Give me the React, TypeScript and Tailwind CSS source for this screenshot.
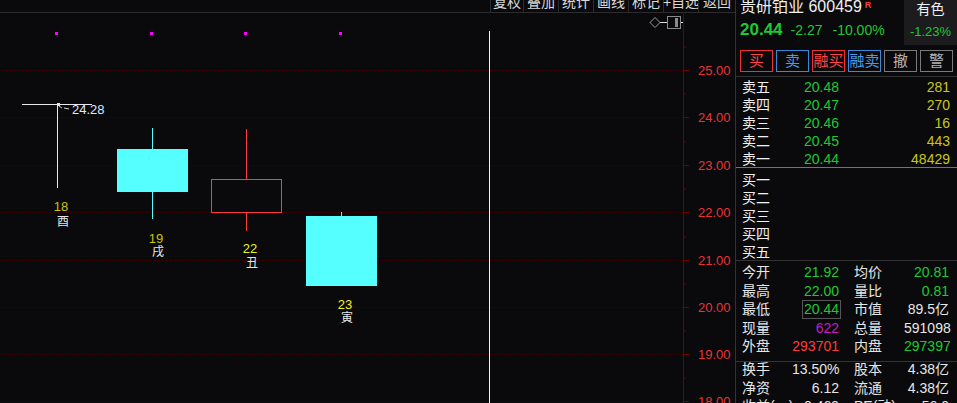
import React from 'react'

const FONT = "font-['Liberation_Sans','Noto_Sans_CJK_SC',sans-serif]"

const toolbarItems = [
  { label: '复权', w: 'w-[33px]' },
  { label: '叠加', w: 'w-[35px]' },
  { label: '统计', w: 'w-[35px]' },
  { label: '画线', w: 'w-[35px]' },
  { label: '标记', w: 'w-[35px]' },
  { label: '+自选', w: 'w-[35px]' },
  { label: '返回', w: 'w-[37px]' },
]

const sells = [
  ['卖五', '20.48', '281'],
  ['卖四', '20.47', '270'],
  ['卖三', '20.46', '16'],
  ['卖二', '20.45', '443'],
  ['卖一', '20.44', '48429'],
]

const buys = ['买一', '买二', '买三', '买四', '买五']

const priceLevels = [
  { y: 70, label: '25.00' },
  { y: 117, label: '24.00' },
  { y: 165, label: '23.00' },
  { y: 212, label: '22.00' },
  { y: 260, label: '21.00' },
  { y: 307, label: '20.00' },
  { y: 354, label: '19.00' },
  { y: 401, label: '18.00' },
]

interface StatRow {
  l1: string
  v1: string
  c1: string
  l2: string
  v2: string
  c2: string
  boxed?: boolean
}

const stats: StatRow[] = [
  { l1: '今开', v1: '21.92', c1: 'text-[#1ec832]', l2: '均价', v2: '20.81', c2: 'text-[#1ec832]' },
  { l1: '最高', v1: '22.00', c1: 'text-[#1ec832]', l2: '量比', v2: '0.81', c2: 'text-[#1ec832]' },
  { l1: '最低', v1: '20.44', c1: 'text-[#1ec832]', l2: '市值', v2: '89.5亿', c2: 'text-[#e6e6e6]', boxed: true },
  { l1: '现量', v1: '622', c1: 'text-[#c01ec8]', l2: '总量', v2: '591098', c2: 'text-[#e6e6e6]' },
  { l1: '外盘', v1: '293701', c1: 'text-[#ff3c3c]', l2: '内盘', v2: '297397', c2: 'text-[#1ec832]' },
]

const stats2: StatRow[] = [
  { l1: '换手', v1: '13.50%', c1: 'text-[#e6e6e6]', l2: '股本', v2: '4.38亿', c2: 'text-[#e6e6e6]' },
  { l1: '净资', v1: '6.12', c1: 'text-[#e6e6e6]', l2: '流通', v2: '4.38亿', c2: 'text-[#e6e6e6]' },
  { l1: '收益(一)', v1: '0.469', c1: 'text-[#e6e6e6]', l2: 'PE(动)', v2: '56.0', c2: 'text-[#e6e6e6]' },
]

function Toolbar() {
  return (
    <div className="flex h-[13px] shrink-0 justify-end overflow-hidden border-b border-[#2c2c2c]">
      {toolbarItems.map((item) => (
        <div
          key={item.label}
          className={`${item.w} flex h-[12px] justify-center overflow-visible whitespace-nowrap border-l border-[#2c2c2c] text-[14px] leading-[14px] text-[#d8d8d8]`}
        >
          <span className="-mt-[5px]">{item.label}</span>
        </div>
      ))}
    </div>
  )
}

function Chart() {
  return (
    <svg width={735} height={390} viewBox="0 13 735 390" className="block shrink-0">
      {/* grid */}
      {priceLevels.map((p) => (
        <line key={p.label} x1={2} x2={683} y1={p.y + 0.5} y2={p.y + 0.5} stroke="#4e0000" strokeDasharray="1 3" />
      ))}

      {/* price axis */}
      <line x1={683.5} x2={683.5} y1={13} y2={403} stroke="#6e0000" />
      {priceLevels.map((p) => (
        <g key={'t' + p.label}>
          <line x1={683} x2={689} y1={p.y + 0.5} y2={p.y + 0.5} stroke="#6e0000" />
          <line x1={683} x2={686} y1={p.y - 23} y2={p.y - 23} stroke="#6e0000" />
          <text x={698} y={p.y + 5} fontSize={13} fill="#e83434">
            {p.label}
          </text>
        </g>
      ))}

      {/* top widget */}
      <line x1={650} x2={683} y1={22.5} y2={22.5} stroke="#e0e0e0" />
      <path d="M655 17.5 L660 22.5 L655 27.5 L650 22.5 Z" fill="#0a0a0c" stroke="#9a9a9a" />
      <rect x={667.5} y={16.5} width={13} height={12} fill="#0a0a0c" stroke="#8a8a8a" />
      <rect x={675} y={18} width={3} height={9} fill="#8a8a8a" />

      {/* markers */}
      {[55, 150, 244, 339].map((x) => (
        <rect key={x} x={x} y={32} width={3} height={3} fill="#ff00ff" />
      ))}

      {/* cursor */}
      <line x1={489.5} x2={489.5} y1={31} y2={403} stroke="#f0f0f0" />

      {/* candle 18 */}
      <line x1={22} x2={92} y1={104.5} y2={104.5} stroke="#e8e8e8" />
      <line x1={57.5} x2={57.5} y1={104} y2={188} stroke="#e8e8e8" />
      <rect x={57} y={103} width={3} height={3} fill="#e8e8e8" />
      <path d="M59 106 L62 108 M64 108 L69 109" stroke="#d0d0d0" fill="none" />
      <text x={72} y={114} fontSize={13} fill="#dde8ff">
        24.28
      </text>
      <text x={61} y={211} fontSize={13} fill="#c8c800" textAnchor="middle">18</text>
      <text x={63} y={226} fontSize={12} fill="#e8e8e8" textAnchor="middle">酉</text>

      {/* candle 19 */}
      <line x1={152.5} x2={152.5} y1={128} y2={219} stroke="#55ffff" />
      <rect x={117} y={149} width={71} height={43} fill="#55ffff" />
      <text x={156} y={243} fontSize={13} fill="#c8c800" textAnchor="middle">19</text>
      <text x={158} y={256} fontSize={12} fill="#e8e8e8" textAnchor="middle">戌</text>

      {/* candle 22 */}
      <line x1={246.5} x2={246.5} y1={129} y2={179} stroke="#ff3c3c" />
      <line x1={246.5} x2={246.5} y1={212} y2={231} stroke="#ff3c3c" />
      <rect x={211.5} y={179.5} width={70} height={33} fill="none" stroke="#ff3c3c" />
      <text x={250} y={253} fontSize={13} fill="#f0f020" textAnchor="middle">22</text>
      <text x={252} y={267} fontSize={12} fill="#e8e8e8" textAnchor="middle">丑</text>

      {/* candle 23 */}
      <line x1={341.5} x2={341.5} y1={212} y2={216} stroke="#55ffff" />
      <rect x={306} y={216} width={71} height={70} fill="#55ffff" />
      <text x={345} y={309} fontSize={13} fill="#f0f020" textAnchor="middle">23</text>
      <text x={347} y={322} fontSize={12} fill="#e8e8e8" textAnchor="middle">寅</text>
    </svg>
  )
}

function TradeButton({ label, tone }: { label: string; tone: 'red' | 'blue' | 'gray' }) {
  const cls =
    tone === 'red'
      ? 'border-[#e83434] text-[#ff4444]'
      : tone === 'blue'
        ? 'border-[#3a88d8] text-[#4a9ae8]'
        : 'border-[#7a7a7a] text-[#b4b4b4]'
  return (
    <div className={`flex h-[22px] w-[33px] items-center justify-center border text-[15px] leading-[20px] ${cls}`}>
      {label}
    </div>
  )
}

function StatLine({ row }: { row: StatRow }) {
  return (
    <div className="flex h-[18.5px] items-center pl-[6px] text-[14px] leading-[17px]">
      <div className="w-[50px] whitespace-nowrap text-[#e6e6e6]">{row.l1}</div>
      <div className={`w-[49px] pr-[2px] text-right ${row.c1}`}>
        {row.boxed ? (
          <span className="-mr-[2px] inline-block border border-[#555] px-[1px]">{row.v1}</span>
        ) : (
          row.v1
        )}
      </div>
      <div className="ml-[13px] w-[50px] whitespace-nowrap text-[#e6e6e6]">{row.l2}</div>
      <div className={`w-[45px] text-right ${row.c2}`}>{row.v2}</div>
    </div>
  )
}

function QuotePanel() {
  return (
    <div className="flex w-[222px] flex-col overflow-hidden border-l border-[#333]">
      {/* header */}
      <div className="flex h-[45px] shrink-0">
        <div className="flex-1 pl-[4px]">
          <div className="-mt-[2px] flex h-[18px] items-start text-[16px] leading-[18px] text-[#f0f0f0]">
            <span>贵研铂业 600459</span>
            <span className="ml-[3px] mt-[3px] text-[9px] font-bold leading-[9px] text-[#ff3c3c]">R</span>
          </div>
          <div className="mt-[4px] flex h-[20px] items-center text-[#1ec832]">
            <span className="text-[17px] font-bold leading-[20px]">20.44</span>
            <span className="ml-[8px] text-[14px] leading-[20px]">-2.27</span>
            <span className="ml-[10px] text-[14px] leading-[20px]">-10.00%</span>
          </div>
        </div>
        <div className="flex w-[53px] flex-col items-center bg-[#1c1c1f]">
          <div className="mt-[1px] text-[14px] leading-[16px] text-[#f0f0f0]">有色</div>
          <div className="mt-[7px] text-[13px] leading-[16px] text-[#1ec832]">-1.23%</div>
        </div>
      </div>

      {/* buttons */}
      <div className="mt-[5px] flex shrink-0 gap-[3px] pl-[4px]">
        <TradeButton label="买" tone="red" />
        <TradeButton label="卖" tone="blue" />
        <TradeButton label="融买" tone="red" />
        <TradeButton label="融卖" tone="blue" />
        <TradeButton label="撤" tone="gray" />
        <TradeButton label="警" tone="gray" />
      </div>

      {/* sells */}
      <div className="mt-[4px] h-[91px] shrink-0 border-t border-[#333] pt-[1px] text-[14px] leading-[18px]">
        {sells.map(([label, price, vol]) => (
          <div key={label} className="flex h-[18px] items-center pl-[6px] pr-[7px]">
            <div className="w-[62px] text-[#f0f0f0]">{label}</div>
            <div className="text-[#1ec832]">{price}</div>
            <div className="flex-1 text-right text-[#c8c814]">{vol}</div>
          </div>
        ))}
      </div>

      {/* buys */}
      <div className="h-[93px] shrink-0 border-t border-[#3a7fc8] pt-[3px] text-[14px] leading-[18px]">
        {buys.map((label) => (
          <div key={label} className="flex h-[18px] items-center pl-[6px] text-[#f0f0f0]">
            {label}
          </div>
        ))}
      </div>

      {/* stats */}
      <div className="h-[101px] shrink-0 border-t border-[#333] pt-[2.5px]">
        {stats.map((row) => (
          <StatLine key={row.l1} row={row} />
        ))}
      </div>
      <div className="shrink-0 border-t border-[#333]">
        <div className="-mt-[1.5px]">
          {stats2.map((row) => (
            <StatLine key={row.l1} row={row} />
          ))}
        </div>
      </div>
    </div>
  )
}

export default function App() {
  return (
    <div className={`flex h-[403px] w-[957px] overflow-hidden bg-[#0a0a0c] ${FONT}`}>
      <div className="flex w-[735px] flex-col">
        <Toolbar />
        <Chart />
      </div>
      <QuotePanel />
    </div>
  )
}
